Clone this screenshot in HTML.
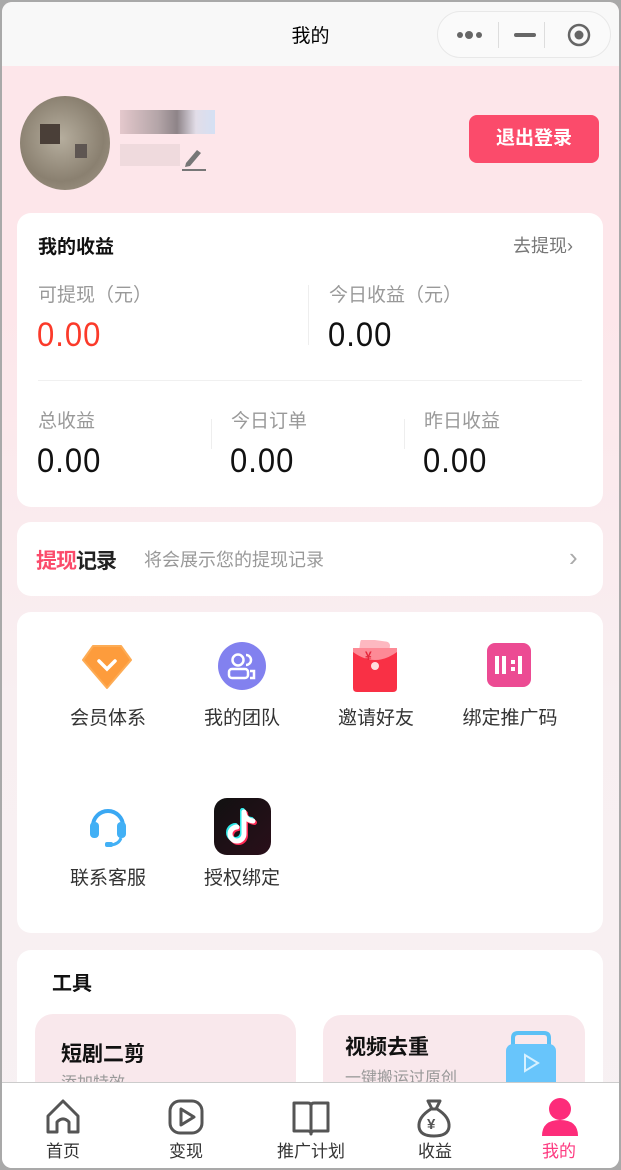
<!DOCTYPE html>
<html><head><meta charset="utf-8"><style>
*{margin:0;padding:0;box-sizing:border-box}
body{width:621px;height:1170px;overflow:hidden;background:#a9a9a9;font-family:"Liberation Sans","Noto Sans CJK SC",sans-serif;position:relative}
.win{position:absolute;left:2px;top:2px;width:617px;height:1166px;border-radius:10px;overflow:hidden;background:linear-gradient(#fde6ea 0,#fde6ea 300px,#f8eff1 700px,#f7f1f3 1166px)}
.nav{position:absolute;left:0;top:0;width:617px;height:64px;background:#f8f8f8}
.nav .t{position:absolute;left:0;right:0;top:19px;text-align:center;font-size:19px;color:#000}
.cap{position:absolute;left:435px;top:9px;width:174px;height:47px;border:1px solid #e8e8e8;border-radius:24px;background:#fafafa}
.card{position:absolute;left:15px;width:586px;background:#fff;border-radius:14px}
.a{position:absolute;white-space:nowrap}
.num{font-size:31px;font-family:"Liberation Sans",sans-serif;letter-spacing:1px;transform:scaleY(1.1);transform-origin:left top}
.lab{font-size:19px;color:#999}
.it{position:absolute;width:134px;text-align:center;font-size:19px;color:#333}
.tab{position:absolute;top:1080px;left:0;width:617px;height:86px;background:#fff;border-top:1px solid #ccc}
.tb{position:absolute;top:1135px;width:120px;text-align:center;font-size:17px;color:#333}
</style></head><body><div class="win">
<div class="nav"><div class="t">我的</div>
<div class="cap">
<svg class="a" style="left:16px;top:14px" width="34" height="18"><circle cx="6" cy="9" r="3" fill="#666"/><circle cx="15" cy="9" r="4" fill="#666"/><circle cx="25" cy="9" r="3" fill="#666"/></svg>
<div class="a" style="left:60px;top:10px;width:1px;height:26px;background:#ddd"></div>
<div class="a" style="left:76px;top:21px;width:22px;height:4px;border-radius:2px;background:#666"></div>
<div class="a" style="left:106px;top:10px;width:1px;height:26px;background:#ddd"></div>
<svg class="a" style="left:128px;top:10px" width="26" height="26"><circle cx="13" cy="13" r="10" fill="none" stroke="#666" stroke-width="2.5"/><circle cx="13" cy="13" r="4.5" fill="#666"/></svg>
</div></div>
<div class="a" style="left:18px;top:94px;width:90px;height:94px;border-radius:50%;background:radial-gradient(circle at 45% 45%,#b6ae9e,#8a8070 60%,#a69c8c);overflow:hidden">
<div class="a" style="left:20px;top:28px;width:20px;height:20px;background:#4a3f38"></div>
<div class="a" style="left:55px;top:48px;width:12px;height:14px;background:#5e5652"></div></div>
<div class="a" style="left:118px;top:108px;width:95px;height:24px;background:linear-gradient(90deg,#e4c8cc,#b4a5a8 40%,#8e8488 60%,#e2dde8 80%,#d4e0f4)"></div>
<div class="a" style="left:118px;top:142px;width:60px;height:22px;background:#efdadd"></div>
<svg class="a" style="left:180px;top:144px" width="24" height="26"><path d="M4 17 L15 4 L19 7 L8 20 L3 21 Z" fill="#777"/><rect x="0" y="23" width="24" height="2" fill="#777"/></svg>
<div class="a" style="left:467px;top:113px;width:130px;height:48px;background:#fb4b6b;border-radius:8px;color:#fff;font-size:19px;font-weight:bold;text-align:center;line-height:48px">退出登录</div>
<div class="card" style="top:211px;height:294px">
<div class="a" style="left:21px;top:19px;font-size:19px;font-weight:bold;color:#111">我的收益</div>
<div class="a" style="left:496px;top:19px;font-size:18px;color:#777">去提现›</div>
<div class="a lab" style="left:21px;top:67px">可提现（元）</div>
<div class="a num" style="left:20px;top:102px;color:#fb3a2a">0.00</div>
<div class="a" style="left:291px;top:72px;width:1px;height:60px;background:#eee"></div>
<div class="a lab" style="left:312px;top:67px">今日收益（元）</div>
<div class="a num" style="left:311px;top:102px;color:#111">0.00</div>
<div class="a" style="left:21px;top:167px;width:544px;height:1px;background:#f0f0f0"></div>
<div class="a lab" style="left:21px;top:193px">总收益</div>
<div class="a num" style="left:20px;top:228px;color:#111">0.00</div>
<div class="a" style="left:194px;top:206px;width:1px;height:30px;background:#eee"></div>
<div class="a lab" style="left:214px;top:193px">今日订单</div>
<div class="a num" style="left:213px;top:228px;color:#111">0.00</div>
<div class="a" style="left:387px;top:206px;width:1px;height:30px;background:#eee"></div>
<div class="a lab" style="left:407px;top:193px">昨日收益</div>
<div class="a num" style="left:406px;top:228px;color:#111">0.00</div>
</div>
<div class="card" style="top:520px;height:74px">
<div class="a" style="left:19px;top:23px;font-size:21px;font-weight:bold;letter-spacing:-1px"><span style="color:#fb4b6b">提现</span><span style="color:#222">记录</span></div>
<div class="a" style="left:127px;top:24px;font-size:18px;color:#999">将会展示您的提现记录</div>
<div class="a" style="left:552px;top:20px;font-size:26px;color:#aaa">›</div>
</div>
<div class="card" style="top:610px;height:321px">
<svg class="a" style="left:64px;top:32px" width="52" height="46"><path d="M12 2 H40 L50 16 L26 44 L2 16 Z" fill="#fd9c3c" stroke="#fdac55" stroke-width="2" stroke-linejoin="round"/><path d="M18 17 L26 25 L34 17" fill="none" stroke="#fff" stroke-width="3.5" stroke-linecap="round"/></svg>
<div class="it" style="left:24px;top:91px">会员体系</div>
<svg class="a" style="left:200px;top:29px" width="50" height="50"><circle cx="25" cy="25" r="24" fill="#8281ef"/><circle cx="21" cy="19" r="5.5" fill="none" stroke="#fff" stroke-width="2.5"/><rect x="12" y="28" width="19" height="9" rx="3" fill="none" stroke="#fff" stroke-width="2.5"/><path d="M29 14 a5 5 0 0 1 0 10 M33 30 h4 v7 h-4" fill="none" stroke="#fff" stroke-width="2.5"/></svg>
<div class="it" style="left:158px;top:91px">我的团队</div>
<svg class="a" style="left:334px;top:28px" width="50" height="54"><rect x="8" y="0" width="30" height="24" rx="4" fill="#fdb8c0" transform="rotate(8 23 12)"/><path d="M2 12 Q2 8 6 8 H42 Q46 8 46 12 V48 Q46 52 42 52 H6 Q2 52 2 48 Z" fill="#f93045"/><path d="M2 12 Q24 28 46 12 V8 H2Z" fill="#fd8a96"/><circle cx="24" cy="26" r="4" fill="#fdd"/><text x="14" y="20" font-size="12" fill="#e5273b" font-weight="bold">¥</text></svg>
<div class="it" style="left:292px;top:91px">邀请好友</div>
<svg class="a" style="left:470px;top:31px" width="44" height="44"><rect width="44" height="44" rx="8" fill="#ec4b93"/><rect x="8" y="13" width="4" height="18" fill="#fff"/><rect x="15" y="13" width="4" height="18" fill="#fff"/><rect x="24" y="17" width="4" height="4" fill="#fff"/><rect x="24" y="24" width="4" height="4" fill="#fff"/><rect x="31" y="13" width="4" height="18" fill="#fff"/></svg>
<div class="it" style="left:426px;top:91px">绑定推广码</div>
<svg class="a" style="left:70px;top:192px" width="42" height="44"><path d="M6 22 A15 15 0 0 1 36 22" fill="none" stroke="#3aa8f3" stroke-width="4"/><rect x="3" y="18" width="9" height="16" rx="4" fill="#42b0f5"/><rect x="30" y="18" width="9" height="16" rx="4" fill="#42b0f5"/><path d="M34 34 Q32 40 24 41" fill="none" stroke="#42b0f5" stroke-width="3"/><rect x="18" y="38" width="8" height="5" rx="2" fill="#42b0f5"/></svg>
<div class="it" style="left:24px;top:251px">联系客服</div>
<div class="a" style="left:197px;top:186px;width:57px;height:57px;border-radius:13px;background:linear-gradient(135deg,#111,#2a0f1a)">
<svg width="57" height="57"><g fill="none" stroke-width="5" stroke-linecap="round"><path d="M30 14 V36 A7 7 0 1 1 23 29" stroke="#ff2a55" transform="translate(1.5 1.5)"/><path d="M30 14 Q31 22 39 23" stroke="#ff2a55" transform="translate(1.5 1.5)"/><path d="M30 14 V36 A7 7 0 1 1 23 29" stroke="#2ee8e8" transform="translate(-1.5 -1.5)"/><path d="M30 14 Q31 22 39 23" stroke="#2ee8e8" transform="translate(-1.5 -1.5)"/><path d="M30 14 V36 A7 7 0 1 1 23 29" stroke="#fff"/><path d="M30 14 Q31 22 39 23" stroke="#fff"/></g></svg></div>
<div class="it" style="left:158px;top:251px">授权绑定</div>
</div>
<div class="card" style="top:948px;height:200px">
<div class="a" style="left:35px;top:17px;font-size:20px;font-weight:bold;color:#111">工具</div>
<div class="a" style="left:18px;top:64px;width:261px;height:120px;border-radius:18px;background:#f9e8ec">
<div class="a" style="left:26px;top:24px;font-size:21px;font-weight:bold;color:#111">短剧二剪</div>
<div class="a" style="left:26px;top:55px;font-size:16px;color:#999">添加特效</div></div>
<div class="a" style="left:306px;top:65px;width:262px;height:120px;border-radius:18px;background:#f9e8ec">
<div class="a" style="left:22px;top:16px;font-size:21px;font-weight:bold;color:#111">视频去重</div>
<div class="a" style="left:22px;top:49px;font-size:16px;color:#999">一键搬运过原创</div>
<svg class="a" style="left:180px;top:15px" width="56" height="60"><path d="M10 16 V8 Q10 3 15 3 H41 Q46 3 46 8 V16" fill="none" stroke="#5cc0f5" stroke-width="4"/><rect x="3" y="14" width="50" height="46" rx="7" fill="#68c5fb"/><path d="M22 25 V41 L35 33 Z" fill="none" stroke="#d7f1ff" stroke-width="2"/></svg></div>
</div>
<div class="tab"></div>
<svg class="a" style="left:42px;top:1096px" width="38" height="38"><path d="M4 34 V18 L19 3 L34 18 V34 H25 V24 Q19 18 13 24 V34 Z" fill="none" stroke="#555" stroke-width="3" stroke-linejoin="round"/></svg>
<div class="tb" style="left:1px">首页</div>
<svg class="a" style="left:165px;top:1096px" width="38" height="38"><rect x="3" y="3" width="32" height="32" rx="10" fill="none" stroke="#555" stroke-width="3"/><path d="M14 11 V27 L27 19 Z" fill="none" stroke="#555" stroke-width="3" stroke-linejoin="round"/></svg>
<div class="tb" style="left:124px">变现</div>
<svg class="a" style="left:289px;top:1096px" width="40" height="40"><path d="M3 5 H17 Q20 5 20 8 V36 Q20 33 17 33 H3 Z M37 5 H23 Q20 5 20 8 V36 Q20 33 23 33 H37 Z" fill="none" stroke="#555" stroke-width="3" stroke-linejoin="round"/></svg>
<div class="tb" style="left:249px">推广计划</div>
<svg class="a" style="left:414px;top:1095px" width="36" height="42"><path d="M12 4 H24 L20 12 H16 Z" fill="none" stroke="#555" stroke-width="3" stroke-linejoin="round"/><path d="M15 12 Q2 20 3 30 Q4 39 18 39 Q32 39 33 30 Q34 20 21 12" fill="none" stroke="#555" stroke-width="3"/><text x="11" y="32" font-size="15" fill="#555" font-weight="bold">¥</text></svg>
<div class="tb" style="left:373px">收益</div>
<svg class="a" style="left:538px;top:1094px" width="40" height="40"><circle cx="20" cy="13" r="11" fill="#fd2c7a"/><path d="M2 40 Q2 24 20 24 Q38 24 38 40 Z" fill="#fd2c7a"/></svg>
<div class="tb" style="left:497px;color:#fd3a80">我的</div>
</div></body></html>
